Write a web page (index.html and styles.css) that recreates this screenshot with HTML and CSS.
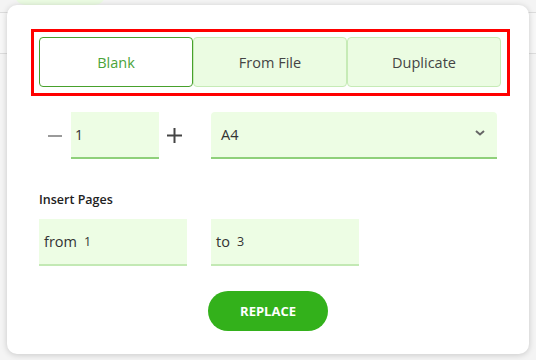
FILE: index.html
```html
<!DOCTYPE html>
<html lang="en">
<head>
    <meta charset="UTF-8">
    <meta name="viewport" content="width=device-width, initial-scale=1.0">
    <title>Insert Pages</title>
    <link rel="stylesheet" href="styles.css">
</head>
<body>
    <div class="toolbar">
        <div class="toolbar-tab"></div>
    </div>
    <div class="popover">
        <div class="source-box">
            <button class="source-btn active">Blank</button>
            <button class="source-btn">From File</button>
            <button class="source-btn">Duplicate</button>
        </div>
        <div class="size-row">
            <span class="minus"></span>
            <input class="count" type="text" value="1">
            <svg class="plus" width="15" height="15" viewBox="0 0 15 15">
                <path d="M7.5 0v15M0 7.5h15" stroke="#444" stroke-width="2"/>
            </svg>
            <div class="select">
                <span>A4</span>
                <svg class="chevron" width="10" height="6" viewBox="0 0 10 6">
                    <path d="M1 1l4 3.5L9 1" fill="none" stroke="#666" stroke-width="2"/>
                </svg>
            </div>
        </div>
        <div class="label">Insert Pages</div>
        <div class="range-row">
            <div class="range-field"><span class="range-word">from</span><span class="range-num">1</span></div>
            <div class="range-field"><span class="range-word">to</span><span class="range-num">3</span></div>
        </div>
        <div class="actions">
            <button class="replace">REPLACE</button>
        </div>
    </div>
</body>
</html>
```

FILE: styles.css
```css
body {
    margin: 0;
    background-color: #f4f4f4;
    font-family: 'Open Sans', 'Noto Sans', sans-serif;
    color: #333;
    height: 360px;
    overflow: hidden;
    position: relative;
}
.toolbar {
    height: 40px;
    margin-top: 12px;
    border-top: 1px solid #dcdcdc;
    border-bottom: 1px solid #dcdcdc;
    background-color: #f7f7f7;
}
.toolbar-tab {
    position: absolute;
    top: -15px;
    left: 15px;
    width: 90px;
    height: 20px;
    border-radius: 10px;
    background-color: #ebfbe2;
}
.popover {
    position: absolute;
    top: 5px;
    left: 7px;
    width: 522px;
    height: 349px;
    box-sizing: border-box;
    padding: 24px 0 0 24px;
    background-color: #ffffff;
    border-radius: 10px;
    box-shadow: 0 1px 6px rgba(0, 0, 0, 0.18);
}
.source-box {
    width: 479px;
    height: 67px;
    box-sizing: border-box;
    border: 3px solid #ff0000;
    padding: 5px 6px 6px 5px;
    display: flex;
}
.source-btn {
    flex: 1;
    height: 50px;
    margin: 0;
    border: 1px solid #c6ebb6;
    border-radius: 4px;
    background-color: #ebfce2;
    color: #444;
    font-family: inherit;
    font-size: 14.5px;
}
.source-btn.active {
    background-color: #ffffff;
    border-color: #48a12c;
    color: #4aa33a;
}
.size-row {
    display: flex;
    align-items: center;
    margin-top: 16px;
    padding-left: 17px;
}
.minus {
    width: 14px;
    height: 2px;
    background-color: #9a9a9a;
    margin-right: 9px;
}
.plus {
    margin: 0 29px 0 8px;
}
.count {
    width: 88px;
    height: 47px;
    box-sizing: border-box;
    border: none;
    border-bottom: 2px solid #8fd07a;
    background-color: #edfde4;
    padding: 0 4px;
    font-family: inherit;
    font-size: 14px;
    color: #333;
    outline: none;
}
.select {
    width: 286px;
    height: 47px;
    box-sizing: border-box;
    border-bottom: 2px solid #8fd07a;
    border-radius: 4px 4px 0 0;
    background-color: #edfde4;
    display: flex;
    align-items: center;
    justify-content: space-between;
    padding: 0 12px 0 10px;
    font-size: 14.5px;
    color: #333;
}
.chevron {
    margin-bottom: 3px;
}
.label {
    margin-top: 33px;
    padding-left: 8px;
    font-size: 12.5px;
    font-weight: 600;
    color: #222;
    line-height: 16px;
}
.range-row {
    display: flex;
    gap: 24px;
    margin-top: 11px;
    padding-left: 8px;
}
.range-field {
    width: 148px;
    height: 47px;
    box-sizing: border-box;
    border-bottom: 2px solid #c3e9b4;
    background-color: #edfde4;
    display: flex;
    align-items: center;
    padding-left: 5px;
    color: #333;
}
.range-word {
    font-size: 14.5px;
    margin-right: 7px;
}
.range-num {
    font-size: 12.5px;
}
.actions {
    display: flex;
    justify-content: center;
    margin-top: 25px;
    margin-left: -24px;
}
.replace {
    width: 120px;
    height: 40px;
    border: none;
    border-radius: 20px;
    background-color: #33b11b;
    color: #ffffff;
    font-family: inherit;
    font-size: 13px;
    font-weight: 700;
}
```
